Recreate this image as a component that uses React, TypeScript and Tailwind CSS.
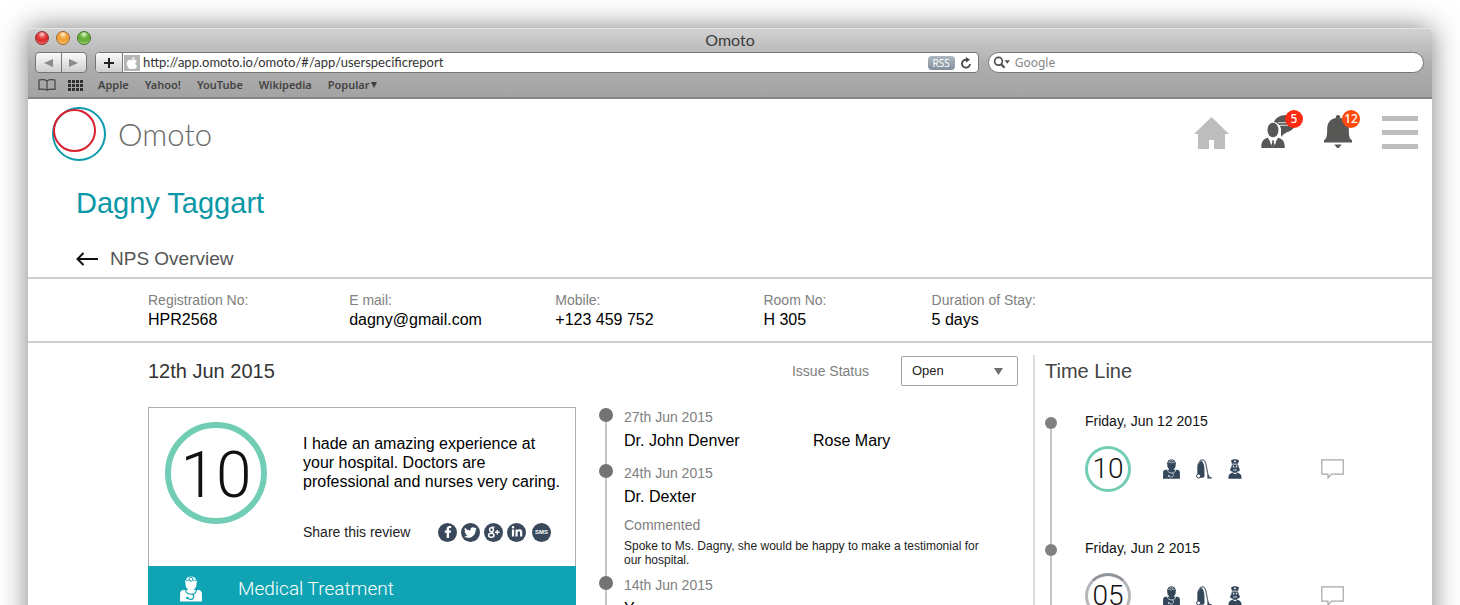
import type { ReactNode } from "react";
import { FaApple, FaFacebookF, FaLinkedinIn, FaTwitter } from "react-icons/fa";

const details = [
  { label: "Registration No:", value: "HPR2568" },
  { label: "E mail:", value: "dagny@gmail.com" },
  { label: "Mobile:", value: "+123 459 752" },
  { label: "Room No:", value: "H 305" },
  { label: "Duration of Stay:", value: "5 days" },
];

const history = [
  { date: "27th Jun 2015", people: ["Dr. John Denver", "Rose Mary"], comment: "" },
  {
    date: "24th Jun 2015",
    people: ["Dr. Dexter"],
    comment: "Spoke to Ms. Dagny, she would be happy to make a testimonial for our hospital.",
  },
  { date: "14th Jun 2015", people: ["You"], comment: "" },
];

const visits = [
  { date: "Friday, Jun 12 2015", score: "10" },
  { date: "Friday, Jun 2 2015", score: "05" },
];

const bookmarks = ["Apple", "Yahoo!", "YouTube", "Wikipedia"];

function DoctorIcon({ className, accent }: { className: string; accent: string }) {
  return (
    <svg viewBox="0 0 22 26" className={className} aria-hidden="true">
      <path
        fill="currentColor"
        d="M6 4C6.500 1.500 8.500.4 11 .4S15.500 1.500 16 4l1.200 1.200-.8 2.300c.2 2-.3 3.700-1.600 4.900l-1 1.600h4.700c2.200.2 3.200 1.200 3.400 3.400l.1 8.200H0l.1-8.200c.2-2.200 1.200-3.200 3.400-3.400h4.700l-1-1.600C5.900 11.200 5.400 9.500 5.600 7.500L4.800 5.200z"
      />
      <circle cx="11" cy="3.200" r="1.900" fill="none" stroke={accent} strokeWidth="1" />
      <path d="M5.800 5.200c1-.8 2-1 3.300-1.200M16.200 5.200c-1-.8-2-1-3.300-1.200" fill="none" stroke={accent} strokeWidth="0.900" />
      <path
        d="M5.500 14c.3 2.600 3 4.200 6.200 4.200 2.600 0 4.400-1.400 4.800-4.200M12 18.200c2.600.5 2.200 5-.8 5.200-1.400.1-2.200-.3-3-.9"
        fill="none"
        stroke={accent}
        strokeWidth="1.200"
      />
      <circle cx="7.400" cy="22" r="1.300" fill={accent} />
    </svg>
  );
}

function VacuumIcon() {
  return (
    <svg viewBox="0 0 16 20" className="h-5 w-4" aria-hidden="true">
      <path d="M1.300 16.500V8.500C1.300 4.500 3 2 5.400 2c2 1 2.900 4 3 8l.1 6.500c0 1.500-1 2.300-2.500 2.300H3z" fill="#34465a" />
      <path
        d="M3 5C3.400 2 4.800.8 6.600.8c2 0 2.800 2 3.500 5l2 10.800"
        fill="none"
        stroke="#66717f"
        strokeWidth="1.300"
      />
      <path d="M11.400 15.800l1.500.2.600 1.700 2.400.9v.9h-4.500z" fill="#34465a" />
      <circle cx="2.600" cy="17" r="2" fill="#fff" stroke="#34465a" strokeWidth="1" />
    </svg>
  );
}

function NurseIcon() {
  return (
    <svg viewBox="0 0 14 20" className="h-5 w-[14px]" aria-hidden="true">
      <path d="M3 1.600C4.200.5 5.500.3 7 .3s2.800.2 4 1.300l-.9 3.200H3.900z" fill="#34465a" />
      <path d="M3.900 5.600h6.200l.7 3c.9.900 1.300 2.100.7 3.400l-2.300.8v1H4.800v-1l-2.300-.8c-.6-1.300-.2-2.500.7-3.400z" fill="#34465a" />
      <path d="M7 1.400v2M6 2.400h2" stroke="#fff" strokeWidth="0.800" />
      <path d="M5 6.600l1.100 1.900M9 6.600L7.900 8.500M5.200 11h3.600" stroke="#e3e6e9" strokeWidth="1.100" />
      <path d="M.4 19.700c0-3.900 1.200-5.100 4-5.900L7 15.200l2.600-1.400c2.800.8 4 2 4 5.900z" fill="#34465a" />
    </svg>
  );
}

function GooglePlusIcon() {
  return (
    <svg viewBox="0 0 13 13" className="size-[13px]" fill="none" stroke="currentColor" aria-hidden="true">
      <ellipse cx="4.500" cy="3.800" rx="1.900" ry="2.100" strokeWidth="1.500" />
      <ellipse cx="4.300" cy="9.300" rx="2.700" ry="2" strokeWidth="1.500" />
      <path d="M4.500 1.200h3M5 5.800l1 1.500" strokeWidth="1.200" />
      <path d="M10.300 4v4.600M8 6.300h4.600" strokeWidth="1.400" />
    </svg>
  );
}

function ShareButton({ name, children }: { name: string; children: ReactNode }) {
  return (
    <button
      aria-label={`Share by ${name}`}
      className="flex size-[19px] items-center justify-center rounded-full bg-[#39485a] text-white"
    >
      {children}
    </button>
  );
}

function Badge({ children, className }: { children: ReactNode; className: string }) {
  return (
    <span
      className={`absolute -top-1 right-0 flex size-[18px] items-center justify-center rounded-full font-['Noto_Sans',sans-serif] text-xs font-medium text-white ${className}`}
    >
      {children}
    </span>
  );
}

function BrowserChrome() {
  return (
    <div className="rounded-t border-b-2 border-[#858585] bg-linear-to-b from-[#d2d2d2] via-[#adadad] via-55% to-[#a3a3a3] font-['Noto_Sans',sans-serif] shadow-[inset_0_1px_0_#e4e4e4]">
      <div className="grid h-6 grid-cols-3 items-center px-[7px]">
        <div className="-mt-1 flex gap-[7px]">
          <button
            aria-label="Close"
            className="size-[14px] rounded-full border border-[#8d2f2c] bg-[radial-gradient(circle_at_50%_20%,#fbd5d2_0%,#e5403c_35%,#d92b2b_60%,#ff9a92_100%)]"
          />
          <button
            aria-label="Minimise"
            className="size-[14px] rounded-full border border-[#a0622a] bg-[radial-gradient(circle_at_50%_20%,#fff0cf_0%,#f3a63c_35%,#f0a03a_60%,#ffe28f_100%)]"
          />
          <button
            aria-label="Zoom"
            className="size-[14px] rounded-full border border-[#3f6f2a] bg-[radial-gradient(circle_at_50%_20%,#e5f7d4_0%,#69b13c_35%,#64ad3a_60%,#c0ee95_100%)]"
          />
        </div>
        <div className="text-center font-[Lato,sans-serif] text-base leading-5 text-[#3c3c3c]">Omoto</div>
      </div>
      <div className="flex pr-2 pl-[7px]">
        <div className="mr-2 flex h-[21px] w-[52px] shrink-0 rounded border border-[#757575] bg-linear-to-b from-[#fafafa] to-[#cfcfcf]">
          <button aria-label="Back" className="flex flex-1 items-center justify-center border-r border-[#757575]">
            <svg viewBox="0 0 9 8" className="h-2 w-[9px] fill-[#8a8a8a]"><path d="M9 0v8L0 4z" /></svg>
          </button>
          <button aria-label="Forward" className="flex flex-1 items-center justify-center">
            <svg viewBox="0 0 9 8" className="h-2 w-[9px] fill-[#8a8a8a]"><path d="M0 0v8l9-4z" /></svg>
          </button>
        </div>
        <div className="mr-[9px] flex h-[21px] min-w-0 flex-[881] items-center rounded border border-[#757575] bg-white">
          <button
            aria-label="Add bookmark"
            className="mr-px flex h-full w-[27px] items-center justify-center rounded-l-[3px] border-r border-[#757575] bg-linear-to-b from-[#fafafa] to-[#cfcfcf]"
          >
            <svg viewBox="0 0 10 10" className="size-[10px]"><path d="M5 0v10M0 5h10" stroke="#222" strokeWidth="2" /></svg>
          </button>
          <span className="mr-[3px] flex size-4 items-center justify-center bg-[#b5b5b5] text-white">
            <FaApple size={14} />
          </span>
          <input
            aria-label="Address"
            defaultValue="http://app.omoto.io/omoto/#/app/userspecificreport"
            className="h-4 min-w-0 flex-1 bg-transparent pb-[2px] font-[Lato,sans-serif] text-[13px] leading-4 text-[#333] outline-none"
          />
          <button className="mr-[6px] flex h-[14px] w-[27px] items-center justify-center rounded-sm bg-linear-to-b from-[#adb8c1] to-[#83919d] text-[10px] leading-3 text-white">
            RSS
          </button>
          <button aria-label="Reload" className="mr-[7px]">
            <svg viewBox="0 0 10 12" className="h-3 w-[10px]">
              <path d="M5.500 2.700A4 4 0 1 0 9 7" fill="none" stroke="#444" strokeWidth="1.800" />
              <path d="M4.800 0v5.400L9 2.700z" fill="#444" />
            </svg>
          </button>
        </div>
        <div className="flex h-[21px] min-w-0 flex-[434] items-center rounded-full border border-[#757575] bg-white">
          <svg viewBox="0 0 18 13" className="mr-1 ml-1 h-[13px] w-[18px] shrink-0" aria-hidden="true">
            <circle cx="5.500" cy="5.300" r="3.900" fill="none" stroke="#505050" strokeWidth="1.700" />
            <path d="M8.200 8.200l3.300 3.500" stroke="#505050" strokeWidth="2.200" />
            <path d="M11.500 4.300H17l-2.700 3.500z" fill="#505050" />
          </svg>
          <input
            aria-label="Search"
            placeholder="Google"
            className="min-w-0 flex-1 bg-transparent text-xs leading-4 outline-none placeholder:text-[#868686]"
          />
        </div>
      </div>
      <nav className="flex h-6 items-center pl-[10px] text-[11px] font-semibold text-[#444]">
        <button aria-label="All bookmarks" className="mr-3">
          <svg viewBox="0 0 18 12" className="h-3 w-[18px]" fill="none" stroke="#454545" strokeWidth="1.200">
            <path d="M9 2C7.500.4 4 .4 1 1v9.400c3-.4 6-.4 8 .8 2-1.200 5-1.200 8-.8V1C14 .4 10.500.4 9 2zv9" />
          </svg>
        </button>
        <button aria-label="Top sites" className="mr-[15px]">
          <svg viewBox="0 0 15 11" className="h-[11px] w-[15px] fill-[#2f2f2f]">
            <path d="M0 0h3v3H0zM4 0h3v3H4zM8 0h3v3H8zM12 0h3v3h-3zM0 4h3v3H0zM4 4h3v3H4zM8 4h3v3H8zM12 4h3v3h-3zM0 8h3v3H0zM4 8h3v3H4zM8 8h3v3H8zM12 8h3v3h-3z" />
          </svg>
        </button>
        <div className="flex gap-4">
          {bookmarks.map((b) => (
            <a key={b} href="#">{b}</a>
          ))}
          <button className="flex items-center gap-px">
            Popular
            <svg viewBox="0 0 6 6" className="size-[6px] fill-[#3d3d3d]"><path d="M0 0h6L3 6z" /></svg>
          </button>
        </div>
      </nav>
    </div>
  );
}

function AppHeader() {
  return (
    <header className="flex items-start justify-between pt-2 pr-[14px] pl-6">
      <a href="#" className="flex items-center gap-3">
        <svg viewBox="0 0 54 54" className="size-[54px]" fill="none" aria-hidden="true">
          <circle cx="27" cy="27" r="26" stroke="#0a9bab" strokeWidth="2" />
          <circle cx="22.500" cy="23.500" r="20.500" stroke="#d9202f" strokeWidth="2" />
        </svg>
        <span className="font-[Lato,sans-serif] text-[31px] leading-9 font-light text-[#6a6a6a]">Omoto</span>
      </a>
      <nav className="flex items-start pt-[7px]">
        <button aria-label="Home" className="mt-[3px] mr-8">
          <svg viewBox="0 0 35 32" className="h-8 w-[35px] fill-[#bdbdbd]">
            <path d="M17.500 0L35 17h-4v15H20v-9h-5v9H4V17H0z" />
          </svg>
        </button>
        <button aria-label="Conversations" className="relative mr-[21px] w-[42px]">
          <svg viewBox="0 0 34 35" className="h-[35px] w-[34px]" aria-hidden="true">
            <path d="M12.500 9C14 4 19 1 25 1c6 0 9 3 9 8 0 4-2 7-6 8.500-3 1-5.500 2.500-8 5.200V15l-1-3.500-4-3z" fill="#575756" />
            <path d="M17 8.700h13M19 11.300h11" stroke="#f2f2f2" strokeWidth="0.900" />
            <ellipse cx="12" cy="16.300" rx="6.700" ry="8.600" fill="#fff" />
            <ellipse cx="12" cy="16" rx="5.500" ry="7.300" fill="#575756" />
            <path d="M.3 34c0-6.300 1.700-8.700 6.500-10.200L12 32l5.200-8.200C22 25.300 23.800 27.700 23.800 34z" fill="#575756" />
            <path d="M8.600 23.600L11 26.500h2l2.400-2.900-.9 6L12 33.500 9.500 29.600z" fill="#fff" />
            <path d="M10.800 26.500h2.400l-.5 1.700 1 3L12 34l-1.700-2.800 1-3z" fill="#575756" />
          </svg>
          <Badge className="bg-[#ff2a12]">5</Badge>
        </button>
        <button aria-label="Notifications" className="relative mr-[22px] w-9">
          <svg viewBox="0 0 28 35" className="h-[35px] w-7 fill-[#575756]" aria-hidden="true">
            <path d="M14 1c1.500 0 2.300 1.200 2.300 3 5.400 1.200 8.500 4.900 8.500 10.500 0 7.300.5 10 3.200 11.700v2.300H0v-2.300c2.700-1.700 3.200-4.400 3.200-11.700C3.200 8.900 6.300 5.200 11.700 4c0-1.800.8-3 2.300-3z" />
            <path d="M10.500 30.400h7c-.3 1.200-.8 1.600-1.500 1.800-.3 1.200-1 1.900-2 1.900s-1.700-.7-2-1.900c-.7-.2-1.200-.6-1.500-1.800z" />
          </svg>
          <Badge className="bg-[#ff4a0a]">12</Badge>
        </button>
        <button aria-label="Menu" className="mt-[2px] flex w-9 flex-col gap-[9px]">
          <span className="h-[5px] bg-[#bdbdbd]" />
          <span className="h-[5px] bg-[#bdbdbd]" />
          <span className="h-[5px] bg-[#bdbdbd]" />
        </button>
      </nav>
    </header>
  );
}

function ReviewCard() {
  return (
    <article className="w-[428px] shrink-0 border border-[#b0b0b0]">
      <div className="flex pt-[14px] pl-4">
        <div className="flex size-[102px] shrink-0 items-center justify-center rounded-full border-6 border-[#72cdb5] pt-[6px] font-[Roboto,sans-serif] text-[64px] leading-none font-light text-[#111]">
          10
        </div>
        <div className="pt-3 pb-6 pl-9">
          <p className="text-base leading-[19px]">
            I hade an amazing experience at
            <br />
            your hospital. Doctors are
            <br />
            professional and nurses very caring.
          </p>
          <div className="mt-[31px] flex items-center">
            <span className="w-[135px] text-sm text-[#222]">Share this review</span>
            <div className="flex gap-1">
              <ShareButton name="Facebook"><FaFacebookF size={12} /></ShareButton>
              <ShareButton name="Twitter"><FaTwitter size={13} /></ShareButton>
              <ShareButton name="Google Plus"><GooglePlusIcon /></ShareButton>
              <ShareButton name="LinkedIn"><FaLinkedinIn size={12} /></ShareButton>
              <span className="ml-[2px] text-[6px] font-bold">
                <ShareButton name="text message">SMS</ShareButton>
              </span>
            </div>
          </div>
        </div>
      </div>
      <button className="-mx-px flex h-[46px] w-[428px] items-center bg-[#0fa3b3] pl-8 font-[Roboto,sans-serif] text-[19px] font-light text-white">
        <DoctorIcon className="mr-9 h-[26px] w-[22px]" accent="#0fa3b3" />
        Medical Treatment
      </button>
    </article>
  );
}

function History() {
  return (
    <ol className="min-w-0 flex-1">
      {history.map((h, i) => (
        <li key={h.date} className="flex gap-[11px]">
          <div className="flex w-[14px] shrink-0 flex-col items-center">
            <span className={i === 0 ? "h-px" : "h-px w-[2px] bg-[#c4c4c4]"} />
            <span className="h-[14px] w-[14px] rounded-full bg-[#737373]" />
            <span className="w-[2px] flex-1 bg-[#c4c4c4]" />
          </div>
          <div className="flex-1">
            <div className="text-sm leading-5 text-[#808080]">{h.date}</div>
            <div className="mt-1 mr-4 grid grid-cols-2 text-base leading-5">
              {h.people.map((p) => (
                <span key={p}>{p}</span>
              ))}
            </div>
            {h.comment ? (
              <div className="pt-2 pr-6 pb-2">
                <div className="text-sm leading-5 text-[#808080]">Commented</div>
                <p className="mt-1 text-xs leading-[14px] text-[#222]">{h.comment}</p>
              </div>
            ) : (
              <div className="h-3" />
            )}
          </div>
        </li>
      ))}
    </ol>
  );
}

function TimeLine() {
  return (
    <aside className="mt-3 border-l-2 border-[#dcdcdc] pl-[10px]">
      <h2 className="h-14 text-[20px] leading-8 text-[#444]">Time Line</h2>
      <ol>
        {visits.map((v, i) => (
          <li key={v.date} className="flex gap-7">
            <div className="flex w-3 shrink-0 flex-col items-center">
              <span className={i === 0 ? "h-[6px]" : "h-[6px] w-[2px] bg-[#c4c4c4]"} />
              <span className="size-3 rounded-full bg-[#808080]" />
              <span className="w-[2px] flex-1 bg-[#c4c4c4]" />
            </div>
            <div className="flex-1 pb-[46px]">
              <div className="text-sm leading-5 text-[#111]">{v.date}</div>
              <div className="mt-[15px] flex items-center">
                <div
                  className={`mr-8 flex size-[46px] items-center justify-center rounded-full border-3 font-[Roboto,sans-serif] text-[28px] leading-none font-light text-[#111] ${
                    v.score === "10" ? "border-[#72cdb5]" : "border-[#b4b6b9] border-t-[#8f959b]"
                  }`}
                >
                  {v.score}
                </div>
                <div className="flex gap-4 text-[#34465a]">
                  <DoctorIcon className="h-5 w-[17px]" accent="#c9d0d6" />
                  <VacuumIcon />
                  <NurseIcon />
                </div>
                <button aria-label="Comments" className="mr-[88px] ml-auto">
                  <svg viewBox="0 0 23 20" className="h-5 w-[23px]" fill="none" stroke="#a6a6a6" strokeWidth="1.200">
                    <path d="M.8.8h21.400v14.400H10.500L7 19v-3.800H.8z" />
                  </svg>
                </button>
              </div>
            </div>
          </li>
        ))}
      </ol>
    </aside>
  );
}

export default function App() {
  return (
    <div className="h-screen overflow-hidden bg-white px-7 pt-7 font-['Liberation_Sans',Arial,sans-serif] text-black">
      <div className="min-h-full rounded-t bg-white shadow-[0_0_28px_rgba(0,0,0,0.5)]">
        <BrowserChrome />
        <AppHeader />
        <h1 className="mt-6 pl-12 text-[29px] leading-9 text-[#0a97a7]">Dagny Taggart</h1>
        <a href="#" className="mt-[26px] flex items-center gap-3 pb-[6px] pl-12 text-[19px] leading-6 text-[#555]">
          <svg viewBox="0 0 22 14" className="h-[14px] w-[22px]" fill="none" stroke="#111" strokeWidth="2" aria-hidden="true">
            <path d="M7.500 1L1.500 7l6 6M1.500 7H22" />
          </svg>
          NPS Overview
        </a>
        <dl className="grid grid-cols-[201fr_206fr_208fr_168fr_500fr] border-y-2 border-[#cfcfcf] pt-[11px] pb-[11px] pl-[120px]">
          {details.map((d) => (
            <div key={d.label}>
              <dt className="text-sm leading-5 text-[#808080]">{d.label}</dt>
              <dd className="text-base leading-5">{d.value}</dd>
            </div>
          ))}
        </dl>
        <div className="grid grid-cols-[1005fr_399fr]">
          <main className="pt-3 pr-[15px] pl-[120px]">
            <div className="flex items-center">
              <h2 className="text-[20px] leading-8 text-[#333]">12th Jun 2015</h2>
              <label htmlFor="status" className="mr-8 ml-auto text-sm text-[#808080]">Issue Status</label>
              <div className="relative">
                <select
                  id="status"
                  className="block h-[30px] w-[117px] appearance-none rounded-xs border border-[#a3a3a3] bg-white pl-[10px] text-[13px] text-[#222]"
                >
                  <option>Open</option>
                  <option>Closed</option>
                </select>
                <svg viewBox="0 0 9 7" className="pointer-events-none absolute top-3 right-[15px] h-[7px] w-[9px] fill-[#707070]">
                  <path d="M0 0h9L4.500 7z" />
                </svg>
              </div>
            </div>
            <div className="mt-5 flex items-start gap-[23px]">
              <ReviewCard />
              <History />
            </div>
          </main>
          <TimeLine />
        </div>
      </div>
    </div>
  );
}
